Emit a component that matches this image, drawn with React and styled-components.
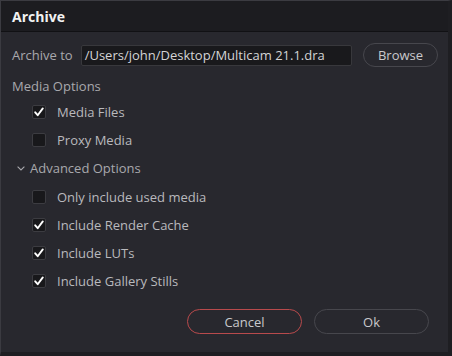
import React from "react";
import styled, { createGlobalStyle } from "styled-components";

const Global = createGlobalStyle`
  html, body { margin: 0; padding: 0; background: #28282e; }
  body { font-family: "Open Sans", "Noto Sans", sans-serif; }
`;

const Dialog = styled.div`
  width: 452px;
  height: 356px;
  box-sizing: border-box;
  background: #28282e;
  border: 1px solid #3b3b41;
  border-right: 4px solid #1e1e22;
  border-bottom: 4px solid #1e1e22;
  display: flex;
  flex-direction: column;
`;

const TitleBar = styled.div`
  height: 30px;
  background: #1c1c20;
  border-bottom: 1px solid #111114;
  display: flex;
  align-items: center;
  padding: 0 11px;
  color: #f2f2f2;
  font-weight: 700;
  font-size: 14px;
`;

const Body = styled.div`
  flex: 1;
  padding: 11px 10px 0 11px;
  display: flex;
  flex-direction: column;
`;

const PathRow = styled.div`
  display: flex;
  align-items: center;
  height: 24px;
`;

const Label = styled.span`
  color: #a8a8ad;
  font-size: 13px;
  white-space: nowrap;
`;

const PathInput = styled.div`
  margin-left: 8px;
  width: 276px;
  height: 21px;
  box-sizing: border-box;
  background: #19191c;
  border: 1px solid #38383c;
  border-radius: 2px;
  color: #d4d4d6;
  font-size: 13px;
  padding-left: 3px;
  display: flex;
  align-items: center;
  white-space: nowrap;
  overflow: hidden;
`;

const PillButton = styled.button`
  height: ${p => p.$h || 24}px;
  width: ${p => p.$w}px;
  border-radius: 13px;
  background: transparent;
  border: 1px solid ${p => (p.$danger ? "#b84a4c" : "#47474d")};
  color: #c9c9cc;
  font-family: inherit;
  font-size: 13px;
  padding: 0;
  display: flex;
  align-items: center;
  justify-content: center;
`;

const BrowseWrap = styled.div`
  margin-left: 11px;
`;

const Section = styled.div`
  height: ${p => p.$h || 28.2}px;
  display: flex;
  align-items: center;
  padding-left: ${p => p.$indent || 0}px;
  gap: ${p => p.$gap || 0}px;
  margin-top: ${p => p.$mt || 0}px;
`;

const Box = styled.span`
  width: 14px;
  height: 14px;
  box-sizing: border-box;
  border-radius: 2px;
  background: #18181b;
  border: 1px solid #3c3c41;
  display: inline-flex;
  align-items: center;
  justify-content: center;
  margin-right: 11px;
`;

const ItemText = styled.span`
  color: #b9b9bd;
  font-size: 13px;
`;

const Footer = styled.div`
  display: flex;
  justify-content: flex-end;
  gap: 12px;
  padding: 14px 9px 0 0;
`;

const Check = () => (
  <svg width="12" height="12" viewBox="0 0 12 12">
    <path d="M2.2 6.3 L4.7 9.2 L9.8 2.4" fill="none" stroke="#ffffff" strokeWidth="1.9" strokeLinecap="round" strokeLinejoin="round" />
  </svg>
);

const CheckItem = ({ checked, children }) => (
  <Section $indent={20}>
    <Box>{checked && <Check />}</Box>
    <ItemText>{children}</ItemText>
  </Section>
);

const Chevron = () => (
  <svg width="8" height="5" viewBox="0 0 8 5">
    <path d="M0.6 0.6 L4 4 L7.4 0.6" fill="none" stroke="#a8a8ad" strokeWidth="1.1" />
  </svg>
);

export default function App() {
  return (
    <>
      <Global />
      <Dialog>
        <TitleBar>Archive</TitleBar>
        <Body>
          <PathRow>
            <Label>Archive to</Label>
            <PathInput>/Users/john/Desktop/Multicam 21.1.dra</PathInput>
            <BrowseWrap>
              <PillButton $w={75} $h={24}>Browse</PillButton>
            </BrowseWrap>
          </PathRow>
          <Section $mt={7} $h={24}>
            <Label>Media Options</Label>
          </Section>
          <CheckItem checked>Media Files</CheckItem>
          <CheckItem>Proxy Media</CheckItem>
          <Section $indent={5} $gap={5}>
            <Chevron />
            <Label>Advanced Options</Label>
          </Section>
          <CheckItem>Only include used media</CheckItem>
          <CheckItem checked>Include Render Cache</CheckItem>
          <CheckItem checked>Include LUTs</CheckItem>
          <CheckItem checked>Include Gallery Stills</CheckItem>
          <Footer>
            <PillButton $danger $w={115} $h={25}>Cancel</PillButton>
            <PillButton $w={115} $h={25}>Ok</PillButton>
          </Footer>
        </Body>
      </Dialog>
    </>
  );
}
